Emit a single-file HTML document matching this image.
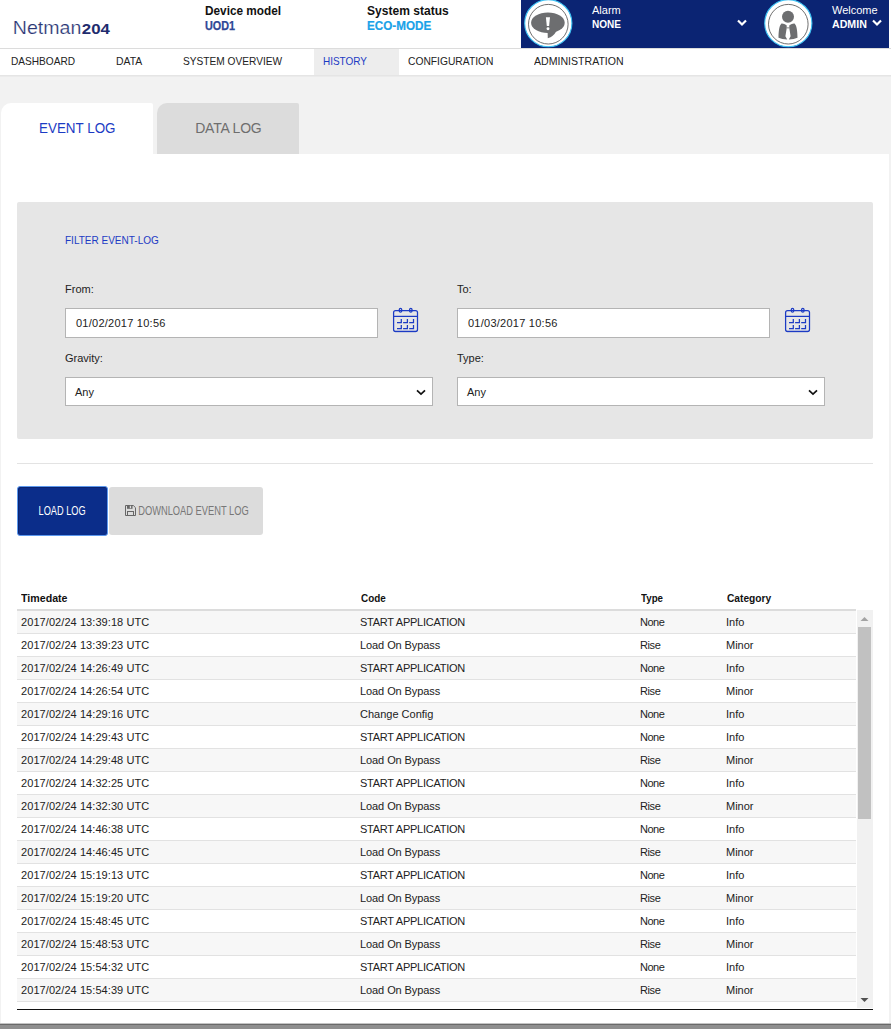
<!DOCTYPE html>
<html><head><meta charset="utf-8">
<style>
*{box-sizing:border-box;margin:0;padding:0}
html,body{width:891px;height:1029px;overflow:hidden;background:#f2f2f2;font-family:"Liberation Sans",sans-serif;color:#222}
.abs{position:absolute;white-space:nowrap}
#hdr{position:absolute;left:0;top:0;width:891px;height:48px;background:#fff}
#hdrline{position:absolute;left:0;top:48px;width:891px;height:1px;background:#dcdcdc}
#nav{position:absolute;left:0;top:49px;width:891px;height:26px;background:#fff}
.nv{position:absolute;top:0;height:26px;line-height:25px;font-size:11px;color:#222;white-space:nowrap}
#blue{position:absolute;left:521px;top:0;width:368px;height:48px;background:#0b2473}
.wt{position:absolute;color:#fff;white-space:nowrap;font-size:11px}
#main{position:absolute;left:1px;top:154px;width:888px;height:869px;background:#fff}
.tab{position:absolute;top:103px;height:51px;border-radius:10px 2px 0 0;font-size:14px;line-height:51px;white-space:nowrap}
#filter{position:absolute;left:17px;top:202px;width:856px;height:237px;background:#e6e6e6;border-radius:2px}
.lbl{position:absolute;font-size:11px;color:#222;white-space:nowrap}
.inp{position:absolute;height:30px;background:#fff;border:1px solid #b4b4b4;font-size:11px;line-height:28px;padding-left:10px;color:#222;white-space:nowrap}
.tr{position:absolute;left:17px;width:839px;height:23px;border-bottom:1px solid #e2e2e2;font-size:11px;color:#222}
.tr span{position:absolute;top:0;line-height:22px;white-space:nowrap}
.th{position:absolute;top:592px;font-size:11px;font-weight:bold;color:#111;white-space:nowrap}
</style></head><body>
<div id="hdr">
  <svg class="abs" style="left:0;top:0" width="130" height="48" viewBox="0 0 130 48"><text x="12.8" y="33.6" font-family="Liberation Sans" font-size="17.8" fill="#2a3674" stroke="#fff" stroke-width="0.2" textLength="68.5" lengthAdjust="spacingAndGlyphs">Netman</text><text x="81.8" y="33.5" font-family="Liberation Sans" font-weight="bold" font-size="14" fill="#1f2c6e" textLength="28" lengthAdjust="spacingAndGlyphs">204</text></svg>
  <div class="abs" style="left:205px;top:3px;font-size:13px;font-weight:bold;color:#111;transform-origin:0 0;transform:scaleX(0.908)">Device model</div>
  <div class="abs" style="left:205px;top:19px;font-size:12px;font-weight:bold;color:#2f4796;transform-origin:0 0;transform:scaleX(0.9);-webkit-text-stroke:0.25px #2f4796">UOD1</div>
  <div class="abs" style="left:367px;top:3px;font-size:13px;font-weight:bold;color:#111;transform-origin:0 0;transform:scaleX(0.927)">System status</div>
  <div class="abs" style="left:367px;top:19px;font-size:12px;font-weight:bold;color:#1aa2e8;transform-origin:0 0;transform:scaleX(0.973);-webkit-text-stroke:0.2px #1aa2e8">ECO-MODE</div>
</div>
<div id="blue">
  <svg class="abs" style="left:0;top:0" width="368" height="48" viewBox="521 0 368 48">
    <circle cx="548.3" cy="23.2" r="23.6" fill="#fff" stroke="#3cc0f2" stroke-width="1.1"/>
    <circle cx="548.3" cy="24.2" r="19.8" fill="none" stroke="#606060" stroke-width="0.9"/>
    <ellipse cx="547.9" cy="22.7" rx="16.8" ry="10.3" fill="#6d6e70"/>
    <path d="M547.6 31 L547.8 38.3 Q553.5 36.5 556.5 31 Z" fill="#6d6e70"/>
    <path d="M545.9 17.3 L550 17.3 L549.1 26 L546.8 26 Z" fill="#fff"/>
    <circle cx="548" cy="28.7" r="1.45" fill="#fff"/>
    <circle cx="788.3" cy="23.2" r="23.6" fill="#fff" stroke="#3cc0f2" stroke-width="1.1"/>
    <circle cx="788.3" cy="24.2" r="19.8" fill="none" stroke="#606060" stroke-width="0.9"/>
    <circle cx="788" cy="16.8" r="6" fill="#6d6e70"/>
    <path d="M778.5 37.8 C778.6 31 779.3 25.5 781.5 23.5 Q784 23.3 786.6 25.2 L786.8 27.6 L785.4 36.2 L787.2 39.6 Q782 39.2 778.5 37.8 Z" fill="#6d6e70"/>
    <path d="M797.5 37.8 C797.4 31 796.7 25.5 794.5 23.5 Q792 23.3 789.4 25.2 L789.2 27.6 L790.6 36.2 L788.8 39.6 Q794 39.2 797.5 37.8 Z" fill="#6d6e70"/>
    <rect x="786.7" y="27.3" width="2.6" height="1.1" fill="#8f8f8f"/>
  </svg>
  
  <div class="wt" style="left:71px;top:4px">Alarm</div>
  <div class="wt" style="left:71px;top:18px;font-weight:bold;transform-origin:0 0;transform:scaleX(0.912)">NONE</div>
  <svg class="abs" style="left:216px;top:19px" width="10" height="8" viewBox="0 0 10 8"><path d="M1 1.5 L5 5.5 L9 1.5" fill="none" stroke="#fff" stroke-width="2.2"/></svg>
  
  <div class="wt" style="left:311px;top:4px">Welcome</div>
  <div class="wt" style="left:311px;top:18px;font-weight:bold;transform-origin:0 0;transform:scaleX(0.967)">ADMIN</div>
  <svg class="abs" style="left:351px;top:19px" width="10" height="8" viewBox="0 0 10 8"><path d="M1 1.5 L5 5.5 L9 1.5" fill="none" stroke="#fff" stroke-width="2.2"/></svg>
</div>
<div id="hdrline"></div>
<div id="nav">
  <div class="nv" style="left:11px;transform-origin:0 0;transform:scaleX(0.92)">DASHBOARD</div>
  <div class="nv" style="left:116px;transform-origin:0 0;transform:scaleX(0.946)">DATA</div>
  <div class="nv" style="left:183px;transform-origin:0 0;transform:scaleX(0.923)">SYSTEM OVERVIEW</div>
  <div class="nv" style="left:314px;width:85px;background:#ededed"></div><div class="nv" style="left:323px;color:#1c3bc4;transform-origin:0 0;transform:scaleX(0.906)">HISTORY</div>
  <div class="nv" style="left:408px;transform-origin:0 0;transform:scaleX(0.934)">CONFIGURATION</div>
  <div class="nv" style="left:534px;transform-origin:0 0;transform:scaleX(0.961)">ADMINISTRATION</div>
</div>
<div class="abs" style="left:0;top:75px;width:891px;height:1px;background:#e5e5e5"></div>
<div class="abs" style="left:0;top:76px;width:891px;height:1px;background:#ebebeb"></div>
<div class="tab" style="left:1px;width:152px;background:#fff;color:#1c3bc4;padding-left:38px"><span style="display:inline-block;transform-origin:0 0;transform:scaleX(0.958)">EVENT LOG</span></div>
<div class="tab" style="left:157px;width:142px;background:#dcdcdc;color:#6e6e6e;padding-left:38.2px;letter-spacing:-0.2px">DATA LOG</div>
<div id="main"></div>
<div id="filter"></div>
<div class="lbl" style="left:65px;top:234px;color:#1c3bc4;transform-origin:0 0;transform:scaleX(0.91)">FILTER EVENT-LOG</div>
<div class="lbl" style="left:65px;top:283px">From:</div>
<div class="lbl" style="left:457px;top:283px">To:</div>
<div class="inp" style="left:65px;top:308px;width:313px;letter-spacing:0.25px">01/02/2017 10:56</div>
<div class="inp" style="left:457px;top:308px;width:313px;letter-spacing:0.25px">01/03/2017 10:56</div>
<svg class="abs" style="left:390px;top:304px" width="32" height="32" viewBox="390 304 32 32"><g fill="none" stroke="#1c3bc4" stroke-width="1.25"><rect x="393.6" y="310.5" width="23.9" height="20.9" rx="2"/><path d="M393.6 316.4H417.5"/><path d="M397.0 322.7H401.3V319.1M397.0 328.6H401.3V325.0M403.1 322.7H407.4V319.1M403.1 328.6H407.4V325.0M409.2 322.7H413.5V319.1M409.2 328.6H413.5V325.0"/><rect x="399.3" y="308.3" width="2.4" height="3.9" rx="1.2"/><rect x="409.6" y="308.3" width="2.4" height="3.9" rx="1.2"/></g><path d="M395 331.9H416" stroke="#1c3bc4" stroke-width="0.8" opacity="0.5"/></svg>
<svg class="abs" style="left:782px;top:304px" width="32" height="32" viewBox="390 304 32 32"><g fill="none" stroke="#1c3bc4" stroke-width="1.25"><rect x="393.6" y="310.5" width="23.9" height="20.9" rx="2"/><path d="M393.6 316.4H417.5"/><path d="M397.0 322.7H401.3V319.1M397.0 328.6H401.3V325.0M403.1 322.7H407.4V319.1M403.1 328.6H407.4V325.0M409.2 322.7H413.5V319.1M409.2 328.6H413.5V325.0"/><rect x="399.3" y="308.3" width="2.4" height="3.9" rx="1.2"/><rect x="409.6" y="308.3" width="2.4" height="3.9" rx="1.2"/></g><path d="M395 331.9H416" stroke="#1c3bc4" stroke-width="0.8" opacity="0.5"/></svg>
<div class="lbl" style="left:65px;top:352px">Gravity:</div>
<div class="lbl" style="left:457px;top:352px">Type:</div>
<div class="inp" style="left:65px;top:377px;width:368px;height:29px;padding-left:9px">Any</div>
<div class="inp" style="left:457px;top:377px;width:368px;height:29px;padding-left:9px">Any</div>
<svg class="abs" style="left:416px;top:388px" width="10" height="8" viewBox="0 0 10 8"><path d="M1 2.3 L5 6.1 L9 2.3" fill="none" stroke="#111" stroke-width="1.7"/></svg>
<svg class="abs" style="left:808px;top:388px" width="10" height="8" viewBox="0 0 10 8"><path d="M1 2.3 L5 6.1 L9 2.3" fill="none" stroke="#111" stroke-width="1.7"/></svg>
<div class="abs" style="left:17px;top:463px;width:856px;height:1px;background:#e3e3e3"></div>
<div class="abs" style="left:17px;top:486px;width:91px;height:50px;background:#0b2d8a;border:1px solid #5c98ee;border-radius:3px;box-shadow:inset 1px 1px 0 #0a2470"></div>
<div class="abs" style="left:109px;top:487px;width:154px;height:48px;background:#dcdcdc;border-radius:3px"></div>
<svg class="abs" style="left:0;top:480px" width="300" height="60" viewBox="0 480 300 60">
<text x="38.6" y="515" font-family="Liberation Sans" font-size="12.2" fill="#fff" textLength="47" lengthAdjust="spacingAndGlyphs">LOAD LOG</text>
<text x="138.2" y="515" font-family="Liberation Sans" font-size="12.6" fill="#777" textLength="110.5" lengthAdjust="spacingAndGlyphs">DOWNLOAD EVENT LOG</text>
<g fill="none" stroke="#666" stroke-width="1"><path d="M125.5 505.5H133.3L135.5 507.7V515.5H125.5Z"/><rect x="127.5" y="511.5" width="6" height="4"/></g>
<rect x="127" y="505" width="5.5" height="3.8" fill="#666"/><rect x="129.8" y="505.8" width="1.3" height="2.4" fill="#ddd"/>
</svg>
<div class="th" style="left:20.8px;transform-origin:0 0;transform:scaleX(0.967)">Timedate</div>
<div class="th" style="left:360.5px;transform-origin:0 0;transform:scaleX(0.9)">Code</div>
<div class="th" style="left:641px;transform-origin:0 0;transform:scaleX(0.885)">Type</div>
<div class="th" style="left:726.5px;transform-origin:0 0;transform:scaleX(0.927)">Category</div>
<div class="abs" style="left:17px;top:609px;width:839px;height:2px;background:#dcdcdc"></div>
<div class="tr" style="top:611px;background:#f7f7f7"><span style="left:4px;letter-spacing:0.07px">2017/02/24 13:39:18 UTC</span><span style="left:343px;letter-spacing:-0.25px">START APPLICATION</span><span style="left:623px;letter-spacing:-0.5px">None</span><span style="left:709px">Info</span></div>
<div class="tr" style="top:634px;background:#fff"><span style="left:4px;letter-spacing:0.07px">2017/02/24 13:39:23 UTC</span><span style="left:343px;letter-spacing:-0.08px">Load On Bypass</span><span style="left:623px;letter-spacing:-0.4px">Rise</span><span style="left:709px">Minor</span></div>
<div class="tr" style="top:657px;background:#f7f7f7"><span style="left:4px;letter-spacing:0.07px">2017/02/24 14:26:49 UTC</span><span style="left:343px;letter-spacing:-0.25px">START APPLICATION</span><span style="left:623px;letter-spacing:-0.5px">None</span><span style="left:709px">Info</span></div>
<div class="tr" style="top:680px;background:#fff"><span style="left:4px;letter-spacing:0.07px">2017/02/24 14:26:54 UTC</span><span style="left:343px;letter-spacing:-0.08px">Load On Bypass</span><span style="left:623px;letter-spacing:-0.4px">Rise</span><span style="left:709px">Minor</span></div>
<div class="tr" style="top:703px;background:#f7f7f7"><span style="left:4px;letter-spacing:0.07px">2017/02/24 14:29:16 UTC</span><span style="left:343px">Change Config</span><span style="left:623px;letter-spacing:-0.5px">None</span><span style="left:709px">Info</span></div>
<div class="tr" style="top:726px;background:#fff"><span style="left:4px;letter-spacing:0.07px">2017/02/24 14:29:43 UTC</span><span style="left:343px;letter-spacing:-0.25px">START APPLICATION</span><span style="left:623px;letter-spacing:-0.5px">None</span><span style="left:709px">Info</span></div>
<div class="tr" style="top:749px;background:#f7f7f7"><span style="left:4px;letter-spacing:0.07px">2017/02/24 14:29:48 UTC</span><span style="left:343px;letter-spacing:-0.08px">Load On Bypass</span><span style="left:623px;letter-spacing:-0.4px">Rise</span><span style="left:709px">Minor</span></div>
<div class="tr" style="top:772px;background:#fff"><span style="left:4px;letter-spacing:0.07px">2017/02/24 14:32:25 UTC</span><span style="left:343px;letter-spacing:-0.25px">START APPLICATION</span><span style="left:623px;letter-spacing:-0.5px">None</span><span style="left:709px">Info</span></div>
<div class="tr" style="top:795px;background:#f7f7f7"><span style="left:4px;letter-spacing:0.07px">2017/02/24 14:32:30 UTC</span><span style="left:343px;letter-spacing:-0.08px">Load On Bypass</span><span style="left:623px;letter-spacing:-0.4px">Rise</span><span style="left:709px">Minor</span></div>
<div class="tr" style="top:818px;background:#fff"><span style="left:4px;letter-spacing:0.07px">2017/02/24 14:46:38 UTC</span><span style="left:343px;letter-spacing:-0.25px">START APPLICATION</span><span style="left:623px;letter-spacing:-0.5px">None</span><span style="left:709px">Info</span></div>
<div class="tr" style="top:841px;background:#f7f7f7"><span style="left:4px;letter-spacing:0.07px">2017/02/24 14:46:45 UTC</span><span style="left:343px;letter-spacing:-0.08px">Load On Bypass</span><span style="left:623px;letter-spacing:-0.4px">Rise</span><span style="left:709px">Minor</span></div>
<div class="tr" style="top:864px;background:#fff"><span style="left:4px;letter-spacing:0.07px">2017/02/24 15:19:13 UTC</span><span style="left:343px;letter-spacing:-0.25px">START APPLICATION</span><span style="left:623px;letter-spacing:-0.5px">None</span><span style="left:709px">Info</span></div>
<div class="tr" style="top:887px;background:#f7f7f7"><span style="left:4px;letter-spacing:0.07px">2017/02/24 15:19:20 UTC</span><span style="left:343px;letter-spacing:-0.08px">Load On Bypass</span><span style="left:623px;letter-spacing:-0.4px">Rise</span><span style="left:709px">Minor</span></div>
<div class="tr" style="top:910px;background:#fff"><span style="left:4px;letter-spacing:0.07px">2017/02/24 15:48:45 UTC</span><span style="left:343px;letter-spacing:-0.25px">START APPLICATION</span><span style="left:623px;letter-spacing:-0.5px">None</span><span style="left:709px">Info</span></div>
<div class="tr" style="top:933px;background:#f7f7f7"><span style="left:4px;letter-spacing:0.07px">2017/02/24 15:48:53 UTC</span><span style="left:343px;letter-spacing:-0.08px">Load On Bypass</span><span style="left:623px;letter-spacing:-0.4px">Rise</span><span style="left:709px">Minor</span></div>
<div class="tr" style="top:956px;background:#fff"><span style="left:4px;letter-spacing:0.07px">2017/02/24 15:54:32 UTC</span><span style="left:343px;letter-spacing:-0.25px">START APPLICATION</span><span style="left:623px;letter-spacing:-0.5px">None</span><span style="left:709px">Info</span></div>
<div class="tr" style="top:979px;background:#f7f7f7"><span style="left:4px;letter-spacing:0.07px">2017/02/24 15:54:39 UTC</span><span style="left:343px;letter-spacing:-0.08px">Load On Bypass</span><span style="left:623px;letter-spacing:-0.4px">Rise</span><span style="left:709px">Minor</span></div>
<div class="abs" style="left:857px;top:610px;width:16px;height:398px;background:#f1f1f1"></div>
<div class="abs" style="left:858px;top:627px;width:13px;height:192px;background:#c1c1c1"></div>
<svg class="abs" style="left:860px;top:616px" width="9" height="6" viewBox="0 0 9 6"><path d="M0.5 5 L4.5 1 L8.5 5 Z" fill="#a3a3a3"/></svg>
<svg class="abs" style="left:860px;top:997px" width="9" height="6" viewBox="0 0 9 6"><path d="M0.5 1 L4.5 5 L8.5 1 Z" fill="#505050"/></svg>
<div class="abs" style="left:17px;top:1009px;width:856px;height:1px;background:#111"></div>
<div class="abs" style="left:0;top:1023px;width:891px;height:1px;background:#c4c4c4"></div>
<div class="abs" style="left:0;top:1024px;width:891px;height:1px;background:#6a6a6a"></div>
<div class="abs" style="left:0;top:1025px;width:891px;height:4px;background:#8f8f8f"></div>
</body></html>
